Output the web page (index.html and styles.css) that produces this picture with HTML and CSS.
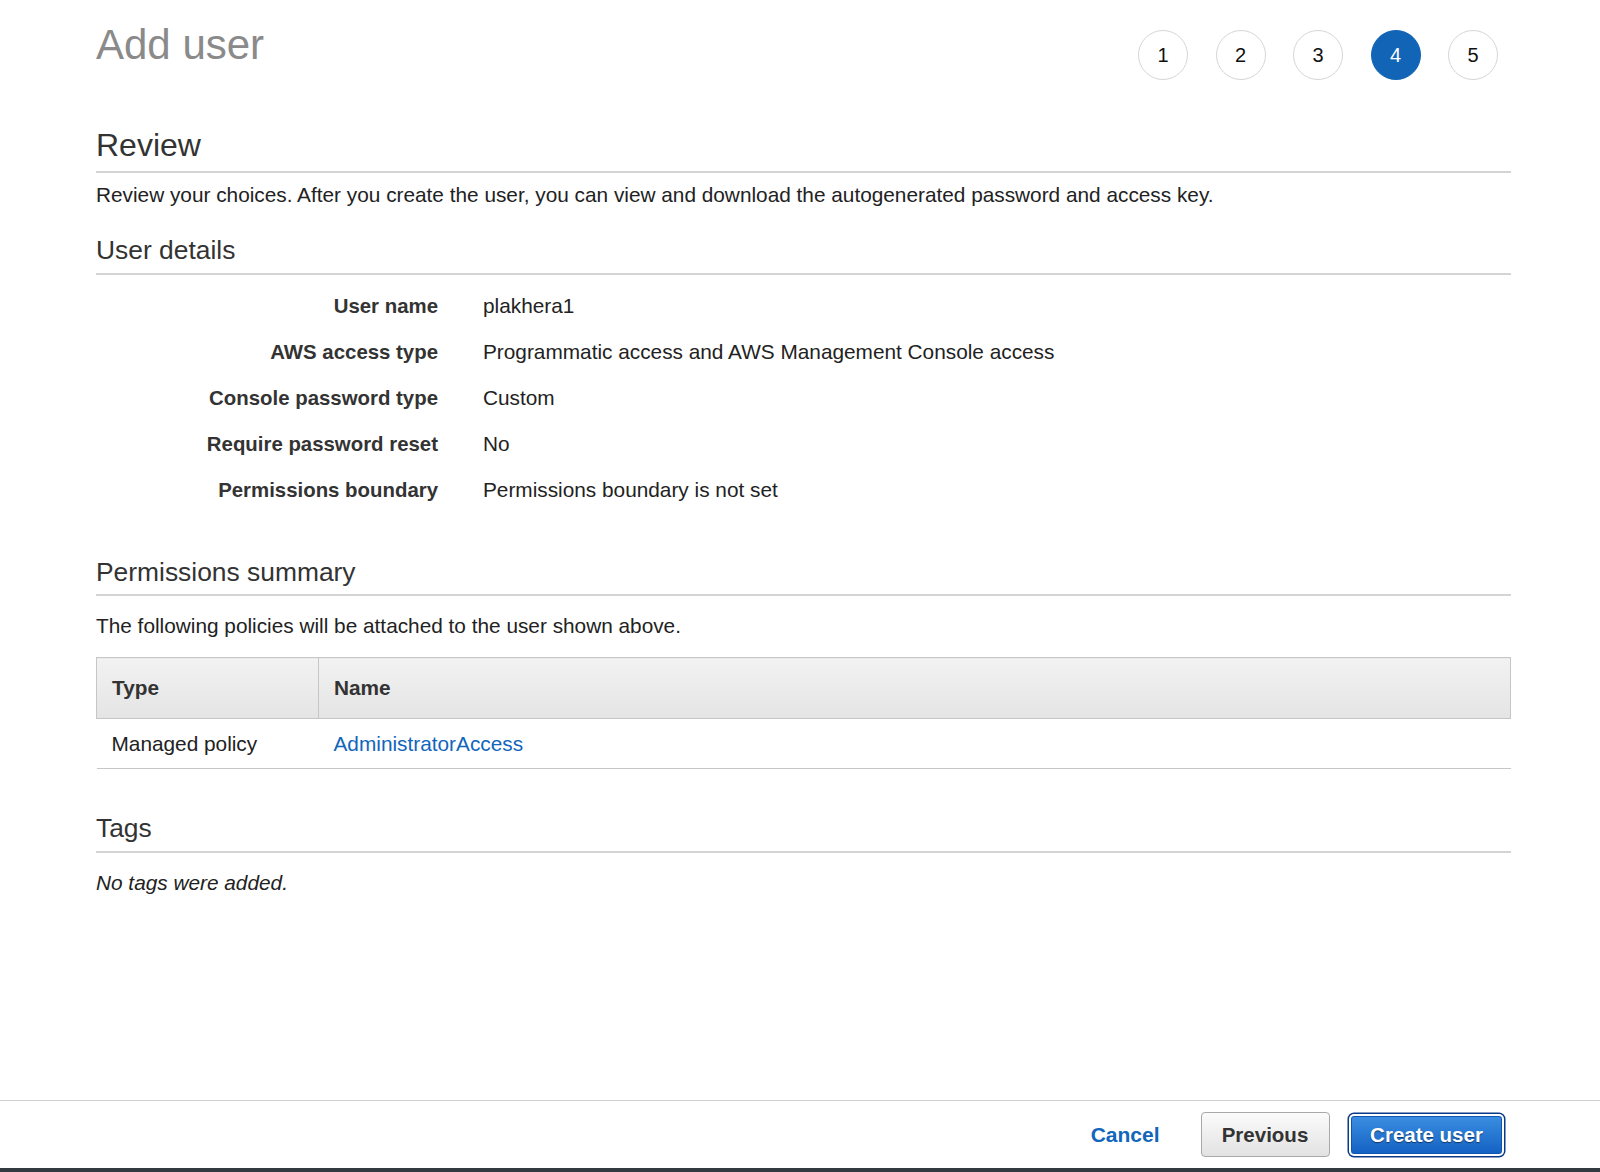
FILE: index.html
```html
<!DOCTYPE html>
<html lang="en">
<head>
    <meta charset="UTF-8">
    <meta name="viewport" content="width=device-width, initial-scale=1.0">
    <title>Add user</title>
    <link rel="stylesheet" href="styles.css">
</head>
<body>
    <div class="page">
      <div class="header">
        <h1 class="page-title">Add user</h1>
        <div class="steps">
          <div class="step">1</div>
          <div class="step">2</div>
          <div class="step">3</div>
          <div class="step active">4</div>
          <div class="step">5</div>
        </div>
      </div>

      <h2 class="review-title">Review</h2>
      <p class="intro">Review your choices. After you create the user, you can view and download the autogenerated password and access key.</p>

      <h3 class="section-title first">User details</h3>
      <div class="details">
        <div class="label">User name</div>
        <div class="value">plakhera1</div>
        <div class="label">AWS access type</div>
        <div class="value">Programmatic access and AWS Management Console access</div>
        <div class="label">Console password type</div>
        <div class="value">Custom</div>
        <div class="label">Require password reset</div>
        <div class="value">No</div>
        <div class="label">Permissions boundary</div>
        <div class="value">Permissions boundary is not set</div>
      </div>

      <h3 class="section-title permissions">Permissions summary</h3>
      <p class="section-text">The following policies will be attached to the user shown above.</p>
      <table class="policy-table">
        <thead>
          <tr>
            <th class="col-type">Type</th>
            <th>Name</th>
          </tr>
        </thead>
        <tbody>
          <tr>
            <td>Managed policy</td>
            <td><a href="#">AdministratorAccess</a></td>
          </tr>
        </tbody>
      </table>

      <h3 class="section-title tags">Tags</h3>
      <p class="section-text empty">No tags were added.</p>
    </div>

    <div class="footer">
      <a href="#" class="cancel">Cancel</a>
      <button class="btn-secondary">Previous</button>
      <button class="btn-primary">Create user</button>
    </div>
</body>
</html>
```

FILE: styles.css
```css
* {
    box-sizing: border-box;
    margin: 0;
    padding: 0;
}

html, body {
    height: 100%;
}

body {
    font-family: 'Liberation Sans', Arial, sans-serif;
    font-size: 20.8px;
    line-height: 24px;
    color: #222;
    background: #fff;
    display: flex;
    flex-direction: column;
}

.page {
    flex: 1;
    padding: 0 89px 0 96px;
}

.header {
    display: flex;
    justify-content: space-between;
    align-items: flex-start;
    padding-top: 20px;
    padding-right: 13px;
}

.page-title {
    font-size: 42px;
    line-height: 50px;
    font-weight: normal;
    color: #8a8a8a;
}

.steps {
    display: flex;
    gap: 27.5px;
    margin-top: 10px;
}

.step {
    width: 50px;
    height: 50px;
    border: 1px solid #d6d6d6;
    border-radius: 50%;
    display: flex;
    align-items: center;
    justify-content: center;
    font-size: 20px;
    color: #111;
}

.step.active {
    background: #1264b6;
    border-color: #1264b6;
    color: #fff;
}

.review-title {
    margin-top: 47px;
    font-size: 32px;
    line-height: 36px;
    font-weight: normal;
    color: #333;
    padding-bottom: 8px;
    border-bottom: 2px solid #d4d4d4;
}

.intro {
    margin-top: 10px;
}

.section-title {
    font-size: 26.4px;
    line-height: 30px;
    font-weight: normal;
    color: #333;
    padding-bottom: 8px;
    border-bottom: 2px solid #d4d4d4;
}

.section-title.first {
    margin-top: 28px;
}

.section-title.permissions {
    margin-top: 55px;
    padding-bottom: 7px;
}

.section-title.tags {
    margin-top: 44px;
}

.details {
    display: grid;
    grid-template-columns: 342px 1fr;
    column-gap: 45px;
    row-gap: 22px;
    margin-top: 19px;
}

.details .label {
    text-align: right;
    font-weight: bold;
    font-size: 20.4px;
    color: #333;
}

.section-text {
    margin-top: 18px;
}

.empty {
    font-style: italic;
}

.policy-table {
    width: 100%;
    margin-top: 19px;
    border-collapse: collapse;
}

.policy-table th {
    text-align: left;
    font-weight: bold;
    color: #333;
    padding: 18px 15px;
    background: linear-gradient(#f2f2f2, #e4e4e4);
    border: 1px solid #c6c6c6;
}

.policy-table .col-type {
    width: 222px;
}

.policy-table td {
    padding: 13px 15px 12px;
    border-bottom: 1px solid #c6c6c6;
}

.policy-table a {
    color: #1166bb;
    text-decoration: none;
}

.footer {
    display: flex;
    justify-content: flex-end;
    align-items: center;
    height: 72px;
    padding: 11px 98px 11px 0;
    border-top: 1px solid #cfcfcf;
    border-bottom: 4px solid #333a40;
}

.cancel {
    color: #1166bb;
    font-weight: bold;
    font-size: 21px;
    text-decoration: none;
    margin-right: 41px;
}

button {
    font-family: inherit;
    font-size: 20.5px;
    font-weight: bold;
    cursor: pointer;
}

.btn-secondary {
    width: 129px;
    height: 45px;
    color: #333;
    background: linear-gradient(#fbfbfb, #e2e2e2);
    border: 1px solid #a9a9a9;
    border-radius: 4px;
    margin-right: 21.5px;
}

.btn-primary {
    width: 151px;
    height: 38px;
    color: #fff;
    background: linear-gradient(#3a8de0, #1462c4);
    border: 1px solid #0f56b0;
    border-radius: 3px;
    text-shadow: 0 1px 1px rgba(0, 0, 0, 0.5);
    box-shadow: 0 0 0 2px #fff, 0 0 0 3.5px #0b3a88;
}
```
